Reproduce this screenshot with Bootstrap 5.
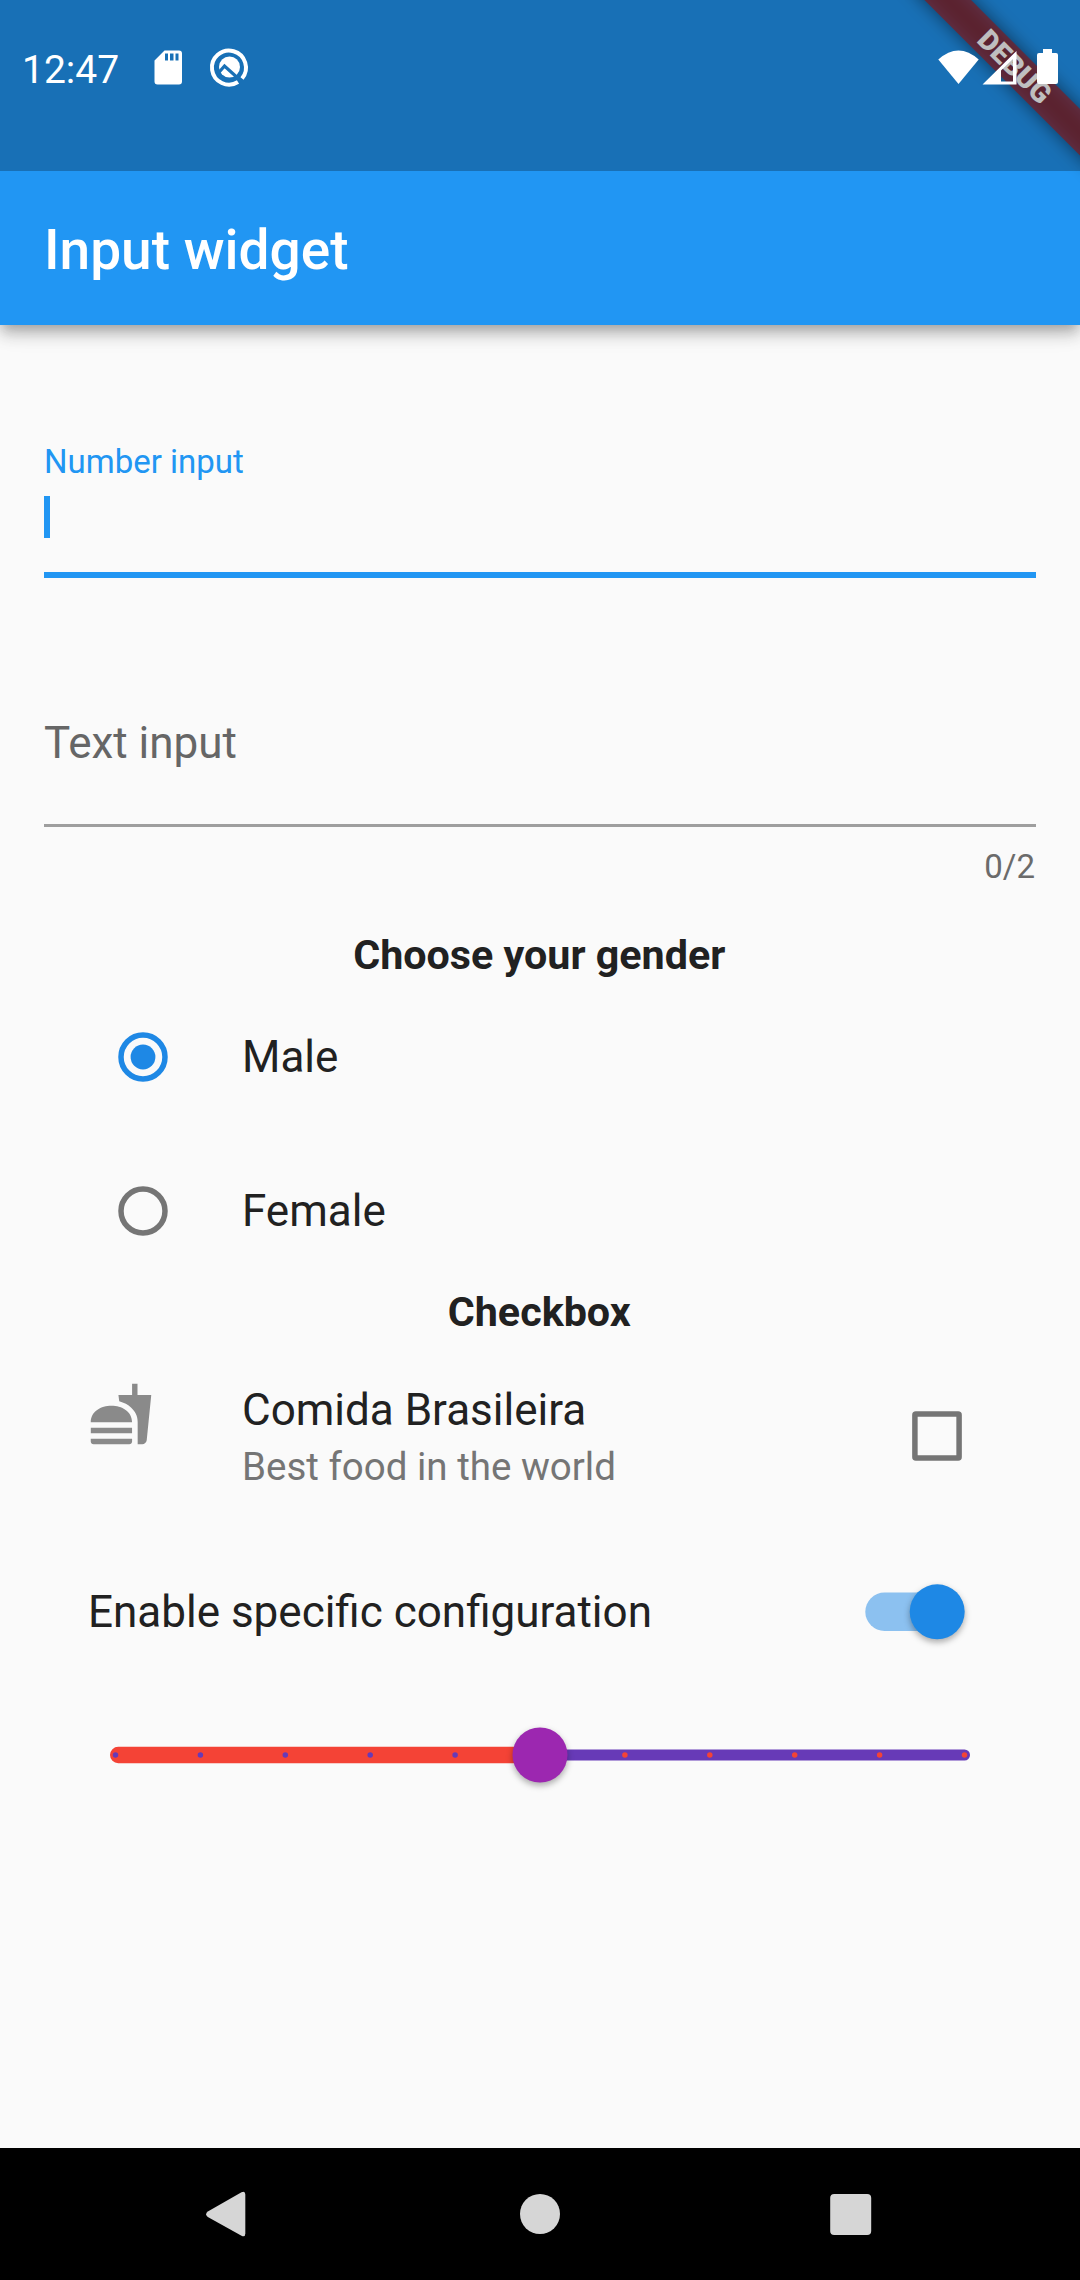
<!DOCTYPE html>
<html lang="en">
<head>
<meta charset="utf-8">
<meta name="viewport" content="width=device-width, initial-scale=1">
<title>Input widget</title>
<link href="https://cdn.jsdelivr.net/npm/bootstrap@5.3.0/dist/css/bootstrap.min.css" rel="stylesheet">
<style>
  body { width: 1080px; height: 2280px; background: #fafafa; color: #212121; font-family: Roboto, "Noto Sans", sans-serif; overflow: hidden; }
  svg { display: block; flex: none; }
  .app-head { background: #2196f3; height: 325px; box-shadow: 0 5.5px 11px -2.75px rgba(0,0,0,.2), 0 11px 13.75px rgba(0,0,0,.14), 0 2.75px 27.5px rgba(0,0,0,.12); clip-path: inset(0 0 -60px 0); }
  .status-bar { height: 171px; padding: 49px 0 0 22px; background: rgba(0,0,0,.25); z-index: 2; color: #fff; font-size: 39px; line-height: 42px; }
  .app-title { height: 154px; padding: 4px 44px 0; font-size: 55px; font-weight: 500; color: #fff; }
  .ribbon-clip { position: absolute; inset: 0; overflow: hidden; }
  .debug-ribbon { position: absolute; right: -110px; top: 0; width: 220px; height: 110px; padding-top: 77px; transform: rotate(45deg); transform-origin: 50% 0; z-index: 1; }
  .debug-ribbon::before { content: ""; position: absolute; left: -20px; right: -20px; top: 77px; height: 33px; background: rgba(0,0,0,.5); filter: blur(9px); }
  .debug-band { position: relative; height: 33px; line-height: 33px; padding-left: 2px; background: rgba(183,28,28,.63); color: #fff; text-align: center; font-size: 28.3px; font-weight: 900; }
  .page-main { height: 1823px; padding: 117px 44px 0; }
  .field-num { height: 136px; border-bottom: 6px solid #2196f3; }
  .field-num label { display: block; font-size: 33px; line-height: 40px; color: #2196f3; }
  .caret { width: 5.5px; height: 41.5px; margin-top: 14px; background: #2196f3; }
  .field-text { height: 249px; border-bottom: 3px solid #9e9e9e; padding-top: 139px; font-size: 44px; line-height: 52px; color: #666; }
  .counter { font-size: 33px; line-height: 40px; margin-top: 20px; padding-right: 1px; color: #6b6b6b; }
  .group-title { font-size: 41.25px; line-height: 48px; font-weight: 700; text-align: center; padding-right: 1.5px; }
  .group-gap { margin: 44px 0 1px; }
  .opt { height: 154px; padding-left: 74px; font-size: 44px; }
  .opt svg { margin: 0 74px 1px 0; }
  .tile { margin-top: 45px; padding: 0 74px 0 44px; font-size: 44px; line-height: 52px; }
  .tile-text { padding: 3px 0 0 88px; }
  .tile-box { margin-top: 30px; }
  .tile-sub { font-size: 38.5px; line-height: 46px; margin-top: 8px; color: #757575; }
  .switch-row { height: 66px; margin-top: 89px; padding: 0 66px 0 44px; font-size: 44px; }
  .thumb { filter: drop-shadow(0 3px 3px rgba(0,0,0,.32)); }
  .slider-row { margin: 80px 0 0 56px; }
  .nav-row { height: 132px; background: #000; padding: 0 206px; }
</style>
</head>
<body>
<header class="app-head position-relative">
  <div class="ribbon-clip"><div class="debug-ribbon"><div class="debug-band">DEBUG</div></div></div>
  <div class="status-bar position-relative d-flex align-items-start">
    <span>12:47</span>
    <svg class="position-absolute top-0 start-0" width="1080" height="171" fill="#fff">
      <path fill-rule="evenodd" d="M164.500 50.500H179q3 0 3 3V81.500q0 3-3 3H157.500q-3 0-3-3V60.500ZM165 53.500V60.500H168V53.500ZM170 53.500V60.500H173.500V53.500ZM175.500 53.500V60.500H178.500V53.500Z"/>
      <path fill="none" stroke="#fff" stroke-width="4" d="M242 78.500A17 17 0 1 0 238 82"/>
      <circle cx="229.500" cy="67" r="10.500"/>
      <path d="M217.500 74L224.500 66L240 80" fill="none" stroke="#1970b6" stroke-width="3.200"/>
      <path d="M938.300 59.500Q958.500 41.500 978.700 59.500L958.500 84Z"/>
      <path fill-rule="evenodd" d="M982.500 84.500L1016.500 51V84.500ZM1001 70.500V81.500H1013V59Z"/>
      <path d="M1043 49H1052V53H1056q2 0 2 2V82q0 2-2 2H1039q-2 0-2-2V55q0-2 2-2H1043Z"/>
    </svg>
  </div>
  <div class="app-title d-flex align-items-center">Input widget</div>
</header>

<main class="page-main">
  <div class="field-num"><label>Number input</label><div class="caret"></div></div>
  <div class="field-text">Text input</div>
  <div class="counter text-end">0/2</div>

  <div class="group-title group-gap">Choose your gender</div>
  <div class="opt d-flex align-items-center">
    <svg width="50" height="50"><circle cx="25" cy="25" r="22" fill="none" stroke="#1e88e5" stroke-width="5.500"/><circle cx="25" cy="25" r="12.400" fill="#1e88e5"/></svg>Male
  </div>
  <div class="opt d-flex align-items-center">
    <svg width="50" height="50"><circle cx="25" cy="25" r="22" fill="none" stroke="#757575" stroke-width="5.500"/></svg>Female
  </div>
  <div class="group-title">Checkbox</div>

  <div class="tile d-flex align-items-start">
    <svg width="66" height="66" viewBox="0 0 24 24" fill="#8a8a8a"><path d="M18.060 22.990h1.660c.84 0 1.530-.64 1.630-1.460L23 5.050h-5V1h-1.970v4.050h-4.970l.3 2.340c1.710.47 3.310 1.320 4.270 2.260 1.440 1.420 2.430 2.890 2.430 5.290v8.050zM1 21.990V21h15.030v.99c0 .55-.45 1-1.010 1H2.010c-.56 0-1.010-.45-1.010-1zm15.030-7c0-8-15.030-8-15.030 0h15.030zM1.020 17h15v2h-15z"/></svg>
    <div class="tile-text flex-grow-1"><div>Comida Brasileira</div><div class="tile-sub">Best food in the world</div></div>
    <svg class="tile-box" width="50" height="50"><rect x="2.900" y="2.900" width="44.200" height="44.200" rx="1" fill="none" stroke="#757575" stroke-width="5.500"/></svg>
  </div>

  <div class="switch-row d-flex align-items-center justify-content-between">
    <span>Enable specific configuration</span>
    <svg width="110" height="66" overflow="visible"><rect x="5.300" y="13.500" width="90.750" height="38.500" rx="19.250" fill="#1e88e5" fill-opacity=".5"/><circle class="thumb" cx="77.200" cy="32.800" r="27.500" fill="#1e88e5"/></svg>
  </div>

  <div class="slider-row">
    <svg width="880" height="60" overflow="visible">
      <rect x="430" y="24.500" width="440" height="11" rx="5.500" fill="#673ab7"/>
      <path d="M440 21.750H18.250a8.250 8.250 0 0 0 0 16.500H440Z" fill="#f44336"/>
      <g fill="#673ab7"><circle cx="15.500" cy="30" r="2.750"/><circle cx="100.400" cy="30" r="2.750"/><circle cx="185.300" cy="30" r="2.750"/><circle cx="270.200" cy="30" r="2.750"/><circle cx="355.100" cy="30" r="2.750"/></g>
      <g fill="#f44336"><circle cx="524.900" cy="30" r="2.750"/><circle cx="609.800" cy="30" r="2.750"/><circle cx="694.700" cy="30" r="2.750"/><circle cx="779.600" cy="30" r="2.750"/><circle cx="864.500" cy="30" r="2.750"/></g>
      <circle class="thumb" cx="440" cy="30" r="27.500" fill="#9c27b0"/>
    </svg>
  </div>
</main>

<nav class="nav-row d-flex align-items-center justify-content-between">
  <svg width="44" height="48" fill="#d6d6d6"><path d="M1.800 21.500L35.500 2.200Q39.300 .5 39.300 4.500V43.500Q39.300 47.500 35.500 45.800L1.800 27Q-1.500 24.200 1.800 21.500Z"/></svg>
  <svg width="42" height="42" fill="#d6d6d6"><circle cx="21" cy="21" r="20"/></svg>
  <svg width="44" height="42" fill="#d6d6d6"><rect x=".2" y="1" width="41" height="41" rx="4"/></svg>
</nav>
<script src="https://cdn.jsdelivr.net/npm/bootstrap@5.3.0/dist/js/bootstrap.bundle.min.js"></script>
</body>
</html>
